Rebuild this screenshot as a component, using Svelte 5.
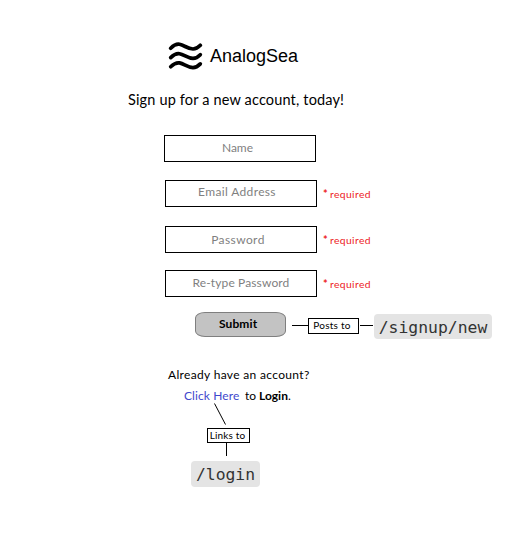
<script>
  const fields = [
    { id: 'name', label: 'Name', required: false },
    { id: 'email', label: 'Email Address', required: true },
    { id: 'password', label: 'Password', required: true },
    { id: 'retype', label: 'Re-type Password', required: true }
  ];
</script>

<main>
  <header>
    <svg width="36" height="30" viewBox="0 0 36 30" aria-hidden="true">
      <g fill="none" stroke="#000" stroke-width="3.7" stroke-linecap="round">
        <path d="M3.7 6.2C6.5 3.4 9 1.7 12.5 2.3C17 3.1 21 7 26 7C29 7 31.3 5.4 33.3 3.3" />
        <path d="M3.7 15.6C6.5 12.8 9 11.1 12.5 11.7C17 12.5 21 16.4 26 16.4C29 16.4 31.3 14.8 33.3 12.7" />
        <path d="M3.7 24.8C6.5 22 9 20.3 12.5 20.9C17 21.7 21 25.6 26 25.6C29 25.6 31.3 24 33.3 21.9" />
      </g>
    </svg>
    <span class="brand">AnalogSea</span>
  </header>
  <h1>Sign up for a new account, today!</h1>

  <form>
    {#each fields as field}
      <div class="row {field.id}">
        <div class="field"><span>{field.label}</span></div>
        {#if field.required}<span class="required"><b>*</b>required</span>{/if}
      </div>
    {/each}
  </form>

  <div class="action">
    <div class="submit"><span>Submit</span></div>
    <i class="line before"></i>
    <div class="note posts"><span>Posts to</span></div>
    <i class="line after"></i>
    <code class="signup">/signup/new</code>
  </div>

  <p class="already">Already have an account?</p>
  <p class="login"><span class="link">Click Here</span><span class="to">to</span><strong>Login</strong>.</p>
  <svg class="diagonal" width="14" height="24" viewBox="0 0 14 24" aria-hidden="true">
    <path d="M1.5 .5L12.5 21.5" stroke="#000" fill="none" />
  </svg>
  <div class="note links"><span>Links to</span></div>
  <i class="drop"></i>
  <code class="path">/login</code>
</main>

<style>
  :global(body) { background: #fff; }
  main {
    box-sizing: border-box;
    width: 510px;
    height: 533px;
    padding-top: 42px;
    overflow: hidden;
    display: flex;
    flex-direction: column;
    align-items: flex-start;
    font-family: Lato, "Liberation Sans", sans-serif;
    color: #000;
    background: #fff;
    white-space: nowrap;
  }
  header { display: flex; height: 30px; margin-left: 167px; }
  svg { display: block; flex: none; }
  .brand { margin-left: 7px; font: 18px/28px "Liberation Sans", Arial, sans-serif; }
  h1 { margin: 18px 0 0 128px; font-size: 14.5px; line-height: 20px; font-weight: 400; letter-spacing: .16px; }
  form { margin: 25px 0 0 165px; }
  .row { display: flex; height: 27px; }
  .field {
    box-sizing: border-box;
    width: 152px;
    height: 27px;
    border: 1px solid #000;
    display: flex;
    justify-content: center;
    color: #7f7f7f;
    font-size: 12px;
    line-height: 24px;
  }
  .name { margin-left: -1px; }
  .name .field { padding-right: 5px; }
  .email { margin-top: 18px; }
  .email .field { padding-right: 8px; line-height: 22px; letter-spacing: .35px; }
  .password { margin-top: 19px; }
  .password .field { padding-right: 6px; line-height: 26px; letter-spacing: .4px; }
  .retype { margin-top: 17px; }
  .retype .field { letter-spacing: .12px; }
  .required { margin-left: 6px; color: #ed1c24; font-size: 10.3px; line-height: 27px; letter-spacing: .4px; }
  .required b { display: inline-block; width: 7px; font-size: 11px; letter-spacing: 0; }
  .action { display: flex; height: 27px; margin: 15px 0 0 195px; }
  .submit {
    box-sizing: border-box;
    width: 91px;
    height: 25px;
    border: 1px solid #7f7f7f;
    border-radius: 10px / 6px;
    background: #c3c3c3;
    font-size: 12px;
    font-weight: 700;
    line-height: 22px;
    padding-left: 23px;
    letter-spacing: .1px;
  }
  .line { height: 1px; margin-top: 13px; background: #000; }
  .before { width: 16px; margin-left: 6px; }
  .after { width: 13px; margin-left: 1px; }
  .note { box-sizing: border-box; border: 1px solid #000; text-align: center; font-size: 10px; background: #fff; }
  .posts { width: 51px; height: 16px; margin-top: 6px; line-height: 13px; padding-right: 3px; letter-spacing: .25px; }
  code {
    box-sizing: border-box;
    display: block;
    border-radius: 4px;
    background: #e4e4e4;
    color: #333;
    font: 16.4px/25px "DejaVu Sans Mono", monospace;
    text-align: center;
  }
  .signup { width: 118px; height: 25px; margin: 2px 0 0 1px; line-height: 27px; }
  p { margin: 0; font-size: 12px; line-height: 18px; }
  .already { margin: 27px 0 0 168px; letter-spacing: .33px; }
  .login { display: flex; margin: 3px 0 0 184px; height: 16px; }
  .link { width: 61px; color: #3f48cc; letter-spacing: .1px; }
  .to { width: 14px; }
  .diagonal { margin: 0 0 0 213px; }
  .links { width: 43px; height: 15px; margin: 1px 0 0 207px; line-height: 12px; padding-right: 2px; letter-spacing: .15px; }
  .drop { width: 1px; height: 13px; margin-left: 226px; background: #000; }
  .path { width: 69px; height: 26px; margin: 5px 0 0 191px; line-height: 27px; }
</style>
